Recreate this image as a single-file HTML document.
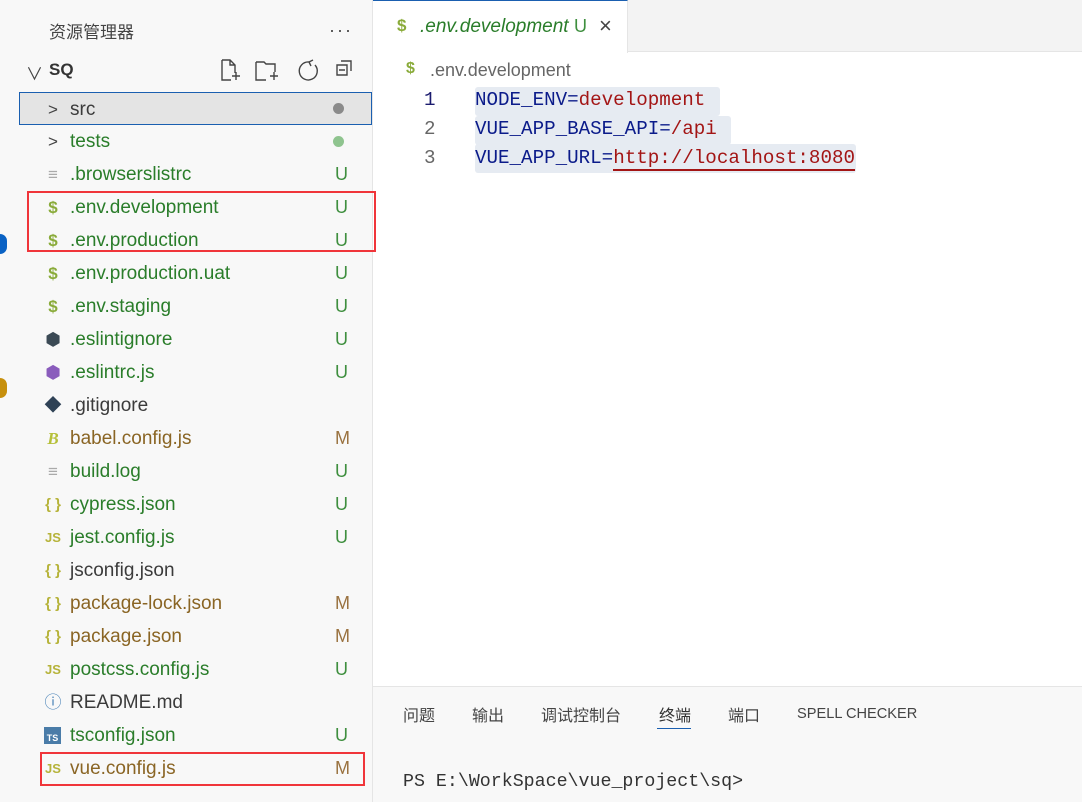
<!DOCTYPE html>
<html><head><meta charset="utf-8"><style>
*{margin:0;padding:0;box-sizing:border-box}
body{width:1082px;height:802px;overflow:hidden;background:#fff;font-family:"Liberation Sans","Noto Sans CJK SC",sans-serif;position:relative}
.abs{position:absolute}
#side{left:19px;top:0;width:354px;height:802px;background:#f8f8f8;border-right:1px solid #e5e5e5}
.row{position:absolute;left:0;width:353px;height:33px;font-size:19px;line-height:33px}
.row .ic{position:absolute;left:24px;width:20px;text-align:center;font-size:17px;font-weight:bold}
.row .nm{position:absolute;left:51px}
.row .bd{position:absolute;left:316px;font-size:18px}
.g{color:#2a7d2a}.m{color:#8a6524}.d{color:#3b3b3b}
.gb{color:#3f8f3f}.mb{color:#9a7240}
.red{position:absolute;border:2px solid #f0353a}
.code{font-family:"Liberation Mono",monospace;font-size:19.2px;position:absolute;line-height:29px}
</style></head><body>
<div class="abs" style="left:0;top:0;width:19px;height:802px;background:#f8f8f8"></div>
<div class="abs" style="left:0;top:234px;width:7px;height:20px;border-radius:0 10px 10px 0;background:#0a62c4"></div>
<div class="abs" style="left:0;top:378px;width:7px;height:20px;border-radius:0 10px 10px 0;background:#c7900d"></div>
<div id="side" class="abs">
 <div class="abs" style="left:30px;top:18px;font-size:17px;color:#444">资源管理器</div>
 <div class="abs" style="left:310px;top:20px;font-size:18px;color:#444;letter-spacing:2px">···</div>
 <div class="abs" style="left:7px;top:60px;font-size:17px;color:#444">∨</div>
 <div class="abs" style="left:30px;top:60px;font-size:17px;font-weight:bold;color:#333">SQ</div>
 <svg class="abs" style="left:200px;top:58px" width="140" height="24" fill="none" stroke="#444" stroke-width="1.4">
  <path d="M3 2h8l5 5v8M3 2v20h9M11 2v5h5M13 18h8M17 14v8"/>
  <path d="M37 4h8l2 2h9v8M37 4v18h10M51 18h8M55 14v8"/>
  <path d="M90 4a9 9 0 1 0 6 3M90 4l4-2M90 4l2 4"/>
  <path d="M118 7h10v10h-10zM122 3h10v10M120 12h6"/>
 </svg>
 <div class="row" style="top:92px;background:#e4e4e4;border:1px solid #1a5fb0"><span class="ic" style="font-weight:normal;color:#444;left:23px;top:0px">&gt;</span><span class="nm d" style="left:50px;top:0px">src</span><span class="abs" style="left:313px;top:10px;width:11px;height:11px;border-radius:50%;background:#8a8a8a"></span></div>
 <div class="row" style="top:125px"><span class="ic" style="font-weight:normal;color:#444">&gt;</span><span class="nm g">tests</span><span class="abs" style="left:314px;top:11px;width:11px;height:11px;border-radius:50%;background:#8fc48f"></span></div>
 <div class="row" style="top:158px"><span class="ic" style="color:#aaa;font-weight:normal">≡</span><span class="nm g">.browserslistrc</span><span class="bd gb">U</span></div>
 <div class="row" style="top:191px"><span class="ic" style="color:#8aab3a">$</span><span class="nm g">.env.development</span><span class="bd gb">U</span></div>
 <div class="row" style="top:224px"><span class="ic" style="color:#8aab3a">$</span><span class="nm g">.env.production</span><span class="bd gb">U</span></div>
 <div class="row" style="top:257px"><span class="ic" style="color:#8aab3a">$</span><span class="nm g">.env.production.uat</span><span class="bd gb">U</span></div>
 <div class="row" style="top:290px"><span class="ic" style="color:#8aab3a">$</span><span class="nm g">.env.staging</span><span class="bd gb">U</span></div>
 <div class="row" style="top:323px"><span class="ic" style="color:#3b4a55">⬢</span><span class="nm g">.eslintignore</span><span class="bd gb">U</span></div>
 <div class="row" style="top:356px"><span class="ic" style="color:#8a5cbc">⬢</span><span class="nm g">.eslintrc.js</span><span class="bd gb">U</span></div>
 <div class="row" style="top:389px"><span class="ic" style="color:#2f4256">◆</span><span class="nm d">.gitignore</span></div>
 <div class="row" style="top:422px"><span class="ic" style="color:#b6c03a;font-style:italic;font-family:'Liberation Serif',serif">B</span><span class="nm m">babel.config.js</span><span class="bd mb">M</span></div>
 <div class="row" style="top:455px"><span class="ic" style="color:#aaa;font-weight:normal">≡</span><span class="nm g">build.log</span><span class="bd gb">U</span></div>
 <div class="row" style="top:488px"><span class="ic" style="color:#b6b33a;font-size:15px">{ }</span><span class="nm g">cypress.json</span><span class="bd gb">U</span></div>
 <div class="row" style="top:521px"><span class="ic" style="color:#b6b33a;font-size:13px">JS</span><span class="nm g">jest.config.js</span><span class="bd gb">U</span></div>
 <div class="row" style="top:554px"><span class="ic" style="color:#b6b33a;font-size:15px">{ }</span><span class="nm d">jsconfig.json</span></div>
 <div class="row" style="top:587px"><span class="ic" style="color:#b6b33a;font-size:15px">{ }</span><span class="nm m">package-lock.json</span><span class="bd mb">M</span></div>
 <div class="row" style="top:620px"><span class="ic" style="color:#b6b33a;font-size:15px">{ }</span><span class="nm m">package.json</span><span class="bd mb">M</span></div>
 <div class="row" style="top:653px"><span class="ic" style="color:#b6b33a;font-size:13px">JS</span><span class="nm g">postcss.config.js</span><span class="bd gb">U</span></div>
 <div class="row" style="top:686px"><span class="ic" style="color:#4a83b8;font-weight:normal">ⓘ</span><span class="nm d">README.md</span></div>
 <div class="row" style="top:719px"><span class="abs" style="left:25px;top:8px;width:17px;height:17px;background:#4a7ca8;color:#fff;font-size:9px;line-height:22px;text-align:center;font-weight:bold">TS</span><span class="nm g">tsconfig.json</span><span class="bd gb">U</span></div>
 <div class="row" style="top:752px"><span class="ic" style="color:#b6b33a;font-size:13px">JS</span><span class="nm m">vue.config.js</span><span class="bd mb">M</span></div>
 <div class="red" style="left:8px;top:191px;width:349px;height:61px"></div>
 <div class="red" style="left:21px;top:752px;width:325px;height:34px"></div>
</div>
<div class="abs" style="left:373px;top:0;width:709px;height:52px;background:#f3f3f3;border-bottom:1px solid #e5e5e5"></div>
<div class="abs" style="left:373px;top:0;width:255px;height:53px;background:#fff;border-right:1px solid #e5e5e5;border-top:1px solid #1a5fb0"></div>
<div class="abs" style="left:397px;top:16px;font-size:17px;color:#8aab3a;font-weight:bold">$</div>
<div class="abs" style="left:420px;top:16px;font-size:19px;color:#2a7d2a;font-style:italic">.env.development</div>
<div class="abs" style="left:574px;top:16px;font-size:18px;color:#3f8f3f">U</div>
<div class="abs" style="left:599px;top:13px;font-size:22px;color:#444">×</div>
<div class="abs" style="left:406px;top:60px;font-size:16px;color:#8aab3a;font-weight:bold">$</div>
<div class="abs" style="left:430px;top:60px;font-size:18px;color:#666">.env.development</div>
<div class="abs" style="left:475px;top:87px;width:245px;height:29px;background:#e6ebf2;border-radius:3px"></div>
<div class="abs" style="left:475px;top:116px;width:256px;height:29px;background:#e6ebf2;border-radius:3px"></div>
<div class="abs" style="left:475px;top:144px;width:381px;height:29px;background:#e6ebf2;border-radius:3px"></div>
<div class="code" style="left:424px;top:86px;color:#1b1b6e">1</div>
<div class="code" style="left:424px;top:115px;color:#666">2</div>
<div class="code" style="left:424px;top:144px;color:#666">3</div>
<div class="code" style="left:475px;top:86px;color:#0b1b8a">NODE_ENV=<span style="color:#a31515">development</span></div>
<div class="code" style="left:475px;top:115px;color:#0b1b8a">VUE_APP_BASE_API=<span style="color:#a31515">/api</span></div>
<div class="code" style="left:475px;top:144px;color:#0b1b8a">VUE_APP_URL=<span style="color:#a31515;border-bottom:2px solid #a31515">http://localhost:8080</span></div>
<div class="abs" style="left:373px;top:686px;width:709px;height:116px;background:#f8f8f8;border-top:1px solid #e5e5e5"></div>
<div class="abs" style="left:403px;top:702px;font-size:16px;color:#444">问题</div>
<div class="abs" style="left:472px;top:702px;font-size:16px;color:#444">输出</div>
<div class="abs" style="left:541px;top:702px;font-size:16px;color:#444">调试控制台</div>
<div class="abs" style="left:659px;top:702px;font-size:16px;color:#333">终端</div>
<div class="abs" style="left:657px;top:728px;width:34px;height:1px;background:#1a5fb0"></div>
<div class="abs" style="left:728px;top:702px;font-size:16px;color:#444">端口</div>
<div class="abs" style="left:797px;top:706px;font-size:14.6px;color:#444">SPELL CHECKER</div>
<div class="abs" style="left:403px;top:772px;font-family:'Liberation Mono',monospace;font-size:18.3px;color:#333">PS E:\WorkSpace\vue_project\sq&gt;</div>
</body></html>
